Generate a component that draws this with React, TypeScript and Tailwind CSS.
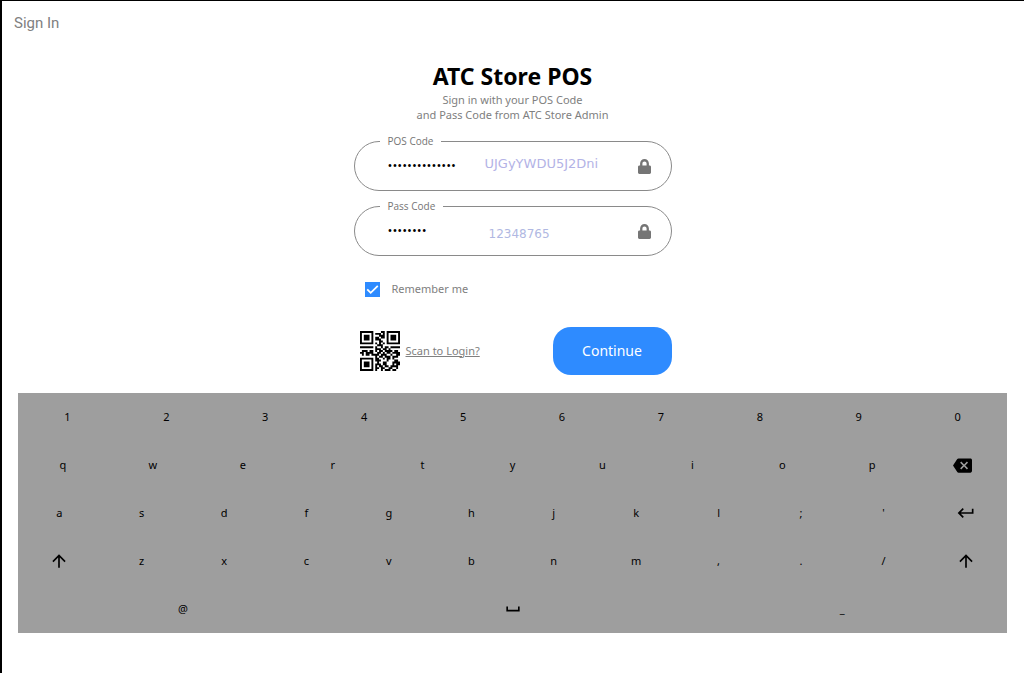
import { useState, type ReactNode } from "react";
import { FaLock } from "react-icons/fa";
import {
  MdArrowUpward,
  MdBackspace,
  MdKeyboardReturn,
  MdSpaceBar,
} from "react-icons/md";

const QR_ROWS = [
  "111111100001101111111",
  "100000101110101000001",
  "101110100011101011101",
  "101110101101101011101",
  "101110101110001011101",
  "100000100011001000001",
  "111111101010101111111",
  "000000000111000000000",
  "111111101001011011111",
  "000000001110110100000",
  "011101101011011110110",
  "110111100110101101111",
  "010110111101110010011",
  "000000001011011101110",
  "111111101100101101000",
  "100000101110001000110",
  "101110100100110001111",
  "101110101110110001011",
  "101110101011011011110",
  "100000101101100110010",
  "111111101001011101100",
];

function QrCode() {
  const path = QR_ROWS.flatMap((row, y) =>
    [...row].map((cell, x) => (cell === "1" ? `M${x} ${y}h1v1h-1z` : "")),
  ).join("");
  return (
    <svg viewBox="0 0 21 21" className="size-10 shrink-0" role="img" aria-label="QR code">
      <path d={path} fill="#000" />
    </svg>
  );
}

type CodeFieldProps = {
  id: string;
  label: string;
  initial: string;
  children: ReactNode;
};

function CodeField({ id, label, initial, children }: CodeFieldProps) {
  const [value, setValue] = useState(initial);
  return (
    <fieldset className="relative rounded-[25px] border border-[#8a8a8a] pr-5 pl-[25px]">
      <legend className="px-2 text-[10px] leading-3 text-[#757575]">
        <label htmlFor={id}>{label}</label>
      </legend>
      <div className="flex h-[43px] items-start">
        <input
          id={id}
          type="password"
          value={value}
          onChange={(e) => setValue(e.target.value)}
          className="h-9 min-w-0 flex-1 bg-transparent pl-2 text-[13px] text-black outline-none"
        />
        <FaLock className="mt-3 h-[15px] w-[13px] shrink-0 text-[#757575]" aria-hidden="true" />
      </div>
      {children}
    </fieldset>
  );
}

type Key = { name: string; icon?: ReactNode };

function Keyboard() {
  const chars = (text: string): Key[] => [...text].map((name) => ({ name }));
  const shift: Key = { name: "Shift", icon: <MdArrowUpward className="size-5" /> };
  const rows: Key[][] = [
    chars("1234567890"),
    [...chars("qwertyuiop"), { name: "Backspace", icon: <MdBackspace className="size-[19px]" /> }],
    [...chars("asdfghjkl;'"), { name: "Enter", icon: <MdKeyboardReturn className="size-5" /> }],
    [shift, ...chars("zxcvbnm,./"), shift],
    [{ name: "@" }, { name: "Space", icon: <MdSpaceBar className="size-5" /> }, { name: "_" }],
  ];
  return (
    <div className="bg-[#9e9e9e]">
      {rows.map((row, r) => (
        <div key={r} className="flex h-12">
          {row.map((key, k) => (
            <button
              key={k}
              type="button"
              aria-label={key.name}
              className="flex flex-1 items-center justify-center text-[11px] text-black"
            >
              {key.icon ?? key.name}
            </button>
          ))}
        </div>
      ))}
    </div>
  );
}

export default function App() {
  const [remember, setRemember] = useState(true);
  return (
    <div className="min-h-screen border-t border-l-2 border-black bg-white font-['Noto_Sans','Open_Sans',sans-serif]">
      <header className="px-3 pt-3 font-[Roboto,sans-serif] text-[15px] leading-5 text-[#808080]">
        Sign In
      </header>
      <main className="pr-[17px] pl-4 pt-7">
        <form className="mx-auto w-full max-w-[318px]" onSubmit={(e) => e.preventDefault()}>
          <h1 className="text-center text-[23px] leading-[31px] font-bold text-black">ATC Store POS</h1>
          <p className="text-center text-[11px] leading-[15px] text-[#808080]">
            Sign in with your POS Code
            <br />
            and Pass Code from ATC Store Admin
          </p>
          <div className="mt-[13px] flex flex-col gap-[9px] font-['Open_Sans','Noto_Sans',sans-serif]">
            <CodeField id="pos-code" label="POS Code" initial="UJGyYWDU5J2Dni">
              <span className="absolute top-[9px] left-[130px] font-['DejaVu_Sans',sans-serif] text-[13px] leading-4 text-[#b3b3e6]">
                UJGyYWDU5J2Dni
              </span>
            </CodeField>
            <CodeField id="pass-code" label="Pass Code" initial="12348765">
              <span className="absolute top-[14px] left-[134px] font-['DejaVu_Sans',sans-serif] text-xs text-[#b0b8e2]">
                12348765
              </span>
            </CodeField>
          </div>
          <label className="mt-[25px] flex items-center gap-3 pl-[11px] text-[11px] leading-4 text-[#808080]">
            <span className="grid">
              <input
                type="checkbox"
                checked={remember}
                onChange={(e) => setRemember(e.target.checked)}
                className="peer col-start-1 row-start-1 size-[15px] appearance-none border border-[#757575] bg-white checked:border-[#2e8bff] checked:bg-[#2e8bff]"
              />
              <svg
                viewBox="0 0 15 15"
                className="pointer-events-none invisible col-start-1 row-start-1 size-[15px] peer-checked:visible"
                aria-hidden="true"
              >
                <path d="M2.2 7.3 5.7 10.8 12.8 3.8" fill="none" stroke="#fff" strokeWidth="1.8" />
              </svg>
            </span>
            Remember me
          </label>
          <div className="mt-[30px] flex items-center justify-between">
            <a href="#scan" className="flex items-center gap-1.5 pl-1.5 text-[11px] text-[#808080] underline">
              <QrCode />
              Scan to Login?
            </a>
            <button
              type="submit"
              className="h-12 w-[119px] rounded-[18px] bg-[#2e8bff] text-sm text-white"
            >
              Continue
            </button>
          </div>
        </form>
        <div className="mt-[18px]">
          <Keyboard />
        </div>
      </main>
    </div>
  );
}
